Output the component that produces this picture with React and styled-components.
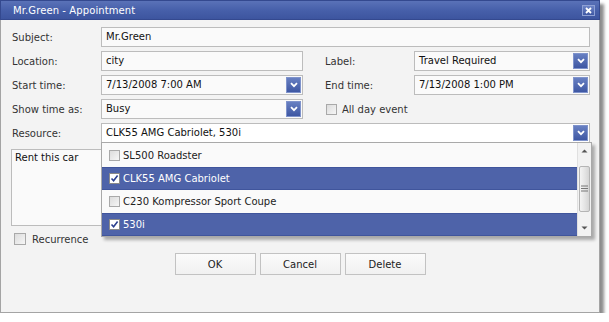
import React from "react";
import styled, { createGlobalStyle } from "styled-components";

const Global = createGlobalStyle`
  html, body { margin: 0; padding: 0; background: #ffffff; }
  body { font-family: "DejaVu Sans", "Liberation Sans", sans-serif; font-size: 10px; }
`;

const Window = styled.div`
  position: relative;
  width: 600px;
  height: 313px;
  box-sizing: border-box;
  background: #f3f3f3;
  border: 1px solid #a4a4a4;
  box-shadow: 4px 4px 3px rgba(0, 0, 0, 0.45);
  display: flex;
  flex-direction: column;
`;

const TitleBar = styled.div`
  height: 20px;
  margin: -1px -1px 0 -1px;
  box-sizing: border-box;
  border: 1px solid #34498f;
  background: linear-gradient(#5a72b8, #4760aa 50%, #3d559f);
  display: flex;
  align-items: center;
  justify-content: space-between;
  padding: 0 4px 0 12px;
`;

const Title = styled.span`
  color: #ffffff;
  font-size: 10px;
  letter-spacing: 0.1px;
`;

const CloseButton = styled.div`
  width: 13px;
  height: 11px;
  box-sizing: border-box;
  border: 1px solid #8ea0d4;
  background: linear-gradient(#6d84c6, #3f58a4);
  display: flex;
  align-items: center;
  justify-content: center;
`;

const Body = styled.div`
  flex: 1;
  display: flex;
  flex-direction: column;
  padding: 7px 9px 0 10px;
`;

const FormGrid = styled.div`
  display: grid;
  grid-template-columns: 90px 202px 21px 90px 1fr;
  grid-auto-rows: 20px;
  row-gap: 4px;
  align-items: center;
`;

const Label = styled.div`
  grid-column: ${(p) => p.col || "1"};
  padding-left: 1px;
  color: #333333;
  white-space: nowrap;
`;

const Field = styled.div`
  position: relative;
  grid-column: ${(p) => p.span || "auto"};
  height: 20px;
  box-sizing: border-box;
  border: 1px solid #bcbcbc;
  background: ${(p) => (p.focused ? "#ffffff" : "#fafafa")};
  padding-left: 4px;
  line-height: 18px;
  color: #111111;
  white-space: nowrap;
`;

const ArrowButton = styled.div`
  position: absolute;
  right: 1px;
  top: 1px;
  width: 15px;
  height: 16px;
  box-sizing: border-box;
  border: 1px solid #7f93cc;
  background: linear-gradient(#6880c2, #3e57a3);
  display: flex;
  align-items: center;
  justify-content: center;
`;

const CheckWrap = styled.label`
  grid-column: ${(p) => p.col || "auto"};
  display: flex;
  align-items: center;
  gap: ${(p) => p.gap || 5}px;
  padding-left: ${(p) => p.indent || 0}px;
  color: ${(p) => p.color || "#333333"};
  white-space: nowrap;
`;

const Box = styled.span`
  width: ${(p) => p.size || 11}px;
  height: ${(p) => p.size || 11}px;
  box-sizing: border-box;
  border: 1px solid ${(p) => (p.checked ? "#8a8a8a" : "#a9a9a9")};
  background: ${(p) =>
    p.checked ? "#ffffff" : "linear-gradient(135deg, #dcdcdc, #f6f6f6)"};
  display: flex;
  align-items: center;
  justify-content: center;
  flex: none;
`;

const Notes = styled.div`
  margin-top: 6px;
  height: 77px;
  box-sizing: border-box;
  border: 1px solid #bcbcbc;
  background: #fafafa;
  padding: 2px 3px;
  color: #111111;
`;

const CheckRow = styled.div`
  margin-top: 6px;
  height: 14px;
  display: flex;
  align-items: center;
`;

const ButtonRow = styled.div`
  margin-top: 7px;
  display: flex;
  justify-content: center;
  gap: 4px;
  padding-right: 1px;
`;

const Button = styled.div`
  width: 81px;
  height: 22px;
  box-sizing: border-box;
  border: 1px solid #c2c2c2;
  background: linear-gradient(#fbfbfb, #f1f1f1);
  display: flex;
  align-items: center;
  justify-content: center;
  color: #222222;
`;

const Popup = styled.div`
  position: absolute;
  left: -1px;
  top: 18px;
  width: 491px;
  height: 95px;
  box-sizing: border-box;
  border: 1px solid #a9a9a9;
  background: #fafafa;
  box-shadow: 3px 3px 3px rgba(0, 0, 0, 0.3);
  display: flex;
  z-index: 5;
`;

const List = styled.div`
  flex: 1;
  display: flex;
  flex-direction: column;
  padding-top: 1px;
`;

const Item = styled.div`
  height: 23px;
  box-sizing: border-box;
  display: flex;
  align-items: center;
  gap: 3px;
  padding-left: 7px;
  background: ${(p) => (p.selected ? "#4e63a9" : "transparent")};
  border-top: 1px solid ${(p) => (p.selected ? "#40559c" : "transparent")};
  border-bottom: 1px solid ${(p) => (p.selected ? "#40559c" : "transparent")};
  color: ${(p) => (p.selected ? "#ffffff" : "#222222")};
`;

const ScrollBar = styled.div`
  width: 14px;
  background: #f2f2f2;
  border-left: 1px solid #e0e0e0;
  display: flex;
  flex-direction: column;
  align-items: center;
  justify-content: space-between;
  padding: 6px 0 6px;
  box-sizing: border-box;
`;

const Thumb = styled.div`
  width: 11px;
  height: 46px;
  box-sizing: border-box;
  border: 1px solid #b4b4b4;
  border-radius: 2px;
  background: linear-gradient(90deg, #f4f4f4, #e2e2e2 60%, #d4d4d4);
  display: flex;
  align-items: center;
  justify-content: center;
  margin-top: -2px;
`;

const Chevron = () => (
  <svg width="8" height="6" viewBox="0 0 8 6">
    <path d="M1 1.2 L4 4.2 L7 1.2" fill="none" stroke="#ffffff" strokeWidth="1.8" />
  </svg>
);

const Check = () => (
  <svg width="9" height="9" viewBox="0 0 9 9">
    <path d="M1.5 4.5 L3.6 6.8 L7.6 1.6" fill="none" stroke="#2a3f8f" strokeWidth="1.6" />
  </svg>
);

const Select = ({ children, span, focused }) => (
  <Field span={span} focused={focused}>
    {children}
    <ArrowButton>
      <Chevron />
    </ArrowButton>
  </Field>
);

const CheckBox = ({ checked, size }) => (
  <Box checked={checked} size={size}>
    {checked && <Check />}
  </Box>
);

const items = [
  { text: "SL500 Roadster", selected: false },
  { text: "CLK55 AMG Cabriolet", selected: true },
  { text: "C230 Kompressor Sport Coupe", selected: false },
  { text: "530i", selected: true },
];

export default function App() {
  return (
    <>
      <Global />
      <Window>
        <TitleBar>
          <Title>Mr.Green - Appointment</Title>
          <CloseButton>
            <svg width="7" height="7" viewBox="0 0 7 7">
              <path d="M1 1 L6 6 M6 1 L1 6" stroke="#ffffff" strokeWidth="1.8" />
            </svg>
          </CloseButton>
        </TitleBar>
        <Body>
          <FormGrid>
            <Label>Subject:</Label>
            <Field span="2 / -1">Mr.Green</Field>

            <Label>Location:</Label>
            <Field>city</Field>
            <Label col="4">Label:</Label>
            <Select>Travel Required</Select>

            <Label>Start time:</Label>
            <Select>7/13/2008 7:00 AM</Select>
            <Label col="4">End time:</Label>
            <Select>7/13/2008 1:00 PM</Select>

            <Label>Show time as:</Label>
            <Select>Busy</Select>
            <CheckWrap col="4" indent={2} gap={5}>
              <CheckBox />
              All day event
            </CheckWrap>

            <Label>Resource:</Label>
            <Select span="2 / -1" focused>
              CLK55 AMG Cabriolet, 530i
              <Popup>
                <List>
                  {items.map((it) => (
                    <Item key={it.text} selected={it.selected}>
                      <CheckBox checked={it.selected} />
                      {it.text}
                    </Item>
                  ))}
                </List>
                <ScrollBar>
                  <svg width="7" height="4" viewBox="0 0 7 4">
                    <path d="M0.5 3.5 L3.5 0.5 L6.5 3.5 Z" fill="#555555" />
                  </svg>
                  <Thumb>
                    <svg width="7" height="7" viewBox="0 0 7 7">
                      <path d="M0 1 H7 M0 3.5 H7 M0 6 H7" stroke="#777777" strokeWidth="1" />
                    </svg>
                  </Thumb>
                  <svg width="7" height="4" viewBox="0 0 7 4">
                    <path d="M0.5 0.5 L3.5 3.5 L6.5 0.5 Z" fill="#555555" />
                  </svg>
                </ScrollBar>
              </Popup>
            </Select>
          </FormGrid>

          <Notes>Rent this car</Notes>

          <CheckRow>
            <CheckWrap indent={3} gap={6}>
              <CheckBox size={12} />
              Recurrence
            </CheckWrap>
          </CheckRow>

          <ButtonRow>
            <Button>OK</Button>
            <Button>Cancel</Button>
            <Button>Delete</Button>
          </ButtonRow>
        </Body>
      </Window>
    </>
  );
}
